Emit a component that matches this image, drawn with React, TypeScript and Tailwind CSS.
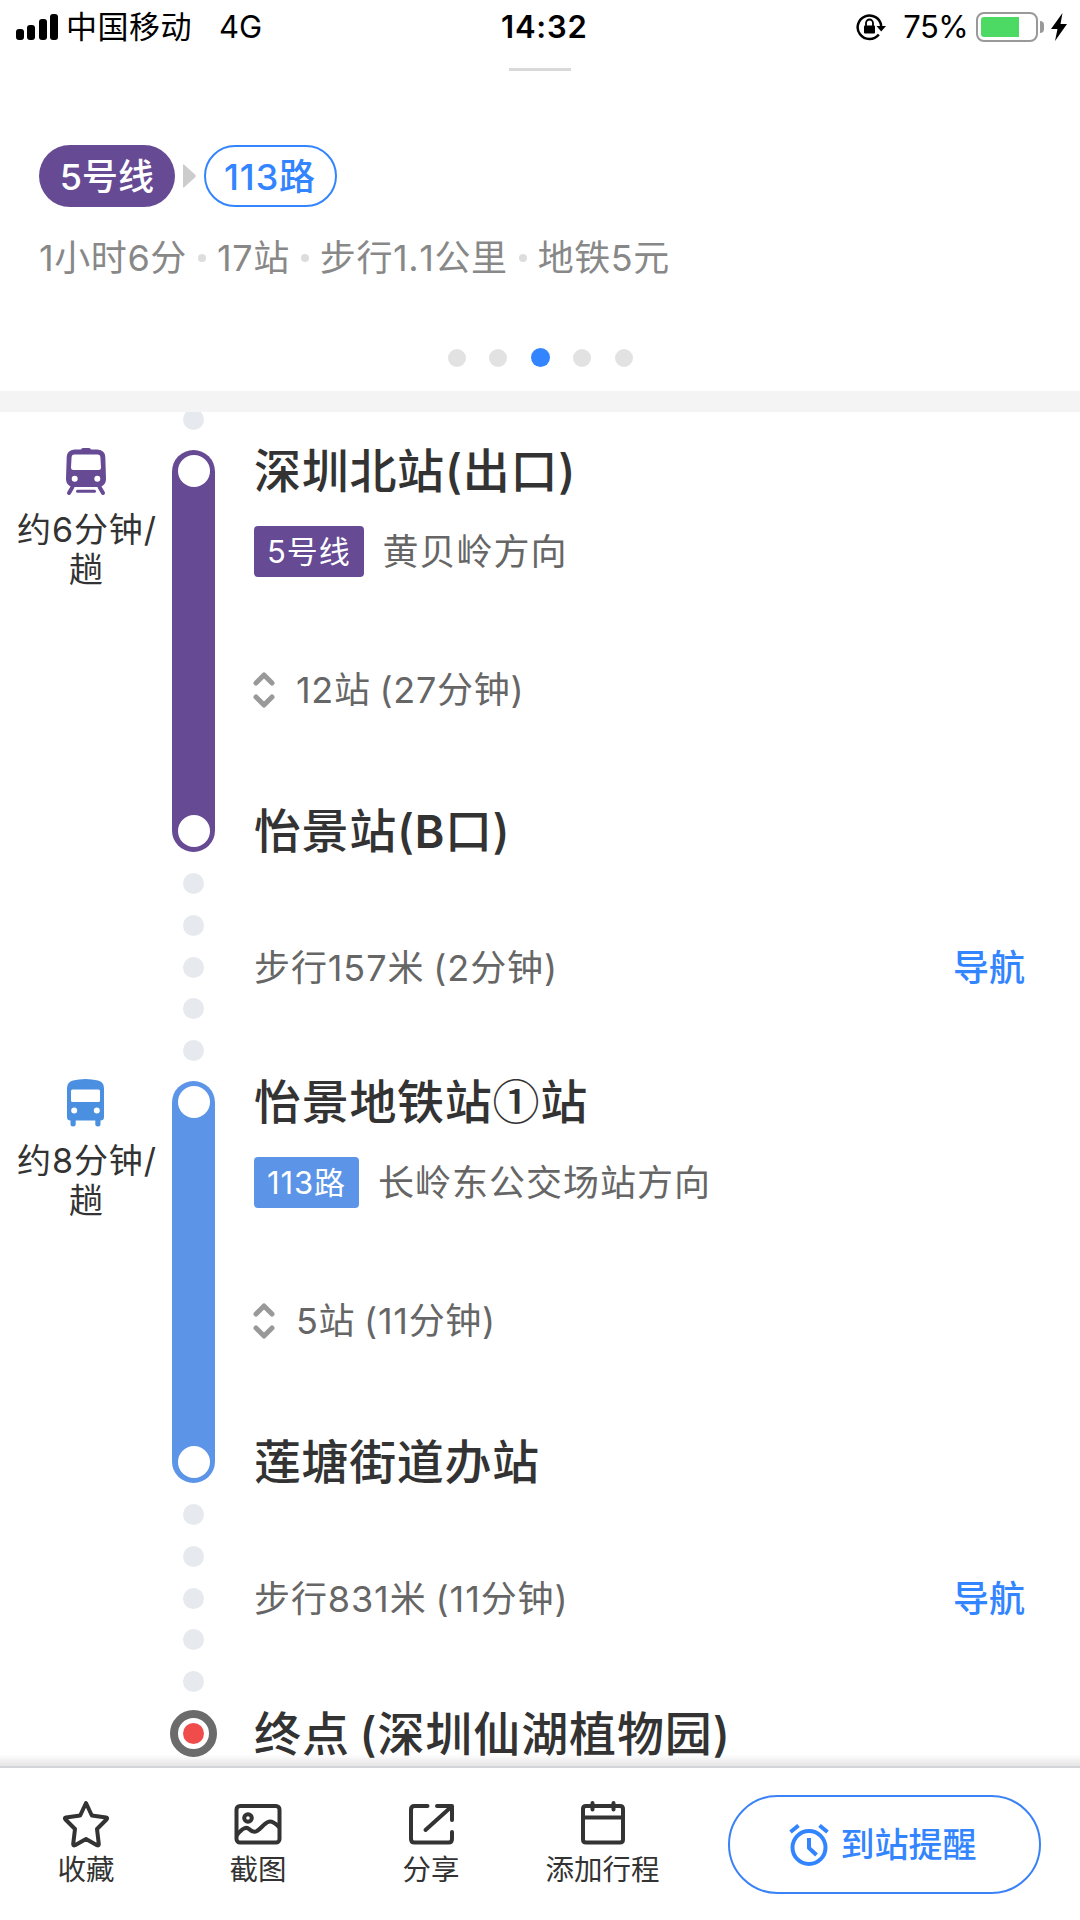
import React from "react";

type Leg = {
  kind: "metro" | "bus";
  every: string;
  from: string;
  line: string;
  direction: string;
  stops: string;
  to: string;
  walk: string;
};

const legs: Leg[] = [
  {
    kind: "metro",
    every: "约6分钟/",
    from: "深圳北站(出口)",
    line: "5号线",
    direction: "黄贝岭方向",
    stops: "12站 (27分钟)",
    to: "怡景站(B口)",
    walk: "步行157米 (2分钟)",
  },
  {
    kind: "bus",
    every: "约8分钟/",
    from: "怡景地铁站①站",
    line: "113路",
    direction: "长岭东公交场站方向",
    stops: "5站 (11分钟)",
    to: "莲塘街道办站",
    walk: "步行831米 (11分钟)",
  },
];

function MetroIcon() {
  return (
    <svg width="40" height="48" viewBox="0 0 40 48" className="block">
      <path
        fill="#664a94"
        fillRule="evenodd"
        d="M15 1.5Q15.4 0 17 0h6q1.600 0 2 1.500h6.500Q39 2 39.300 9l.7 22q0 6-6 8H6q-6-2-6-8L.7 9Q1 2 8.500 1.500ZM8 6.500Q5.700 6.500 5.600 9L5 19.500Q5 22 7.500 22h25Q35 22 35 19.500L34.400 9q-.1-2.500-2.400-2.500ZM8.700 27.700a3 3 0 1 0 0 6 3 3 0 0 0 0-6Zm22.600 0a3 3 0 1 0 0 6 3 3 0 0 0 0-6Z"
      />
      <path stroke="#664a94" strokeWidth="4" strokeLinecap="round" fill="none" d="M6.500 39 3 45M33.500 39 37 45" />
      <path stroke="#664a94" strokeWidth="3" strokeLinecap="round" fill="none" d="M11.500 43.200h17" />
    </svg>
  );
}

function BusIcon() {
  return (
    <svg width="37" height="48" viewBox="0 0 37 48" className="block">
      <path
        fill="#4a8fe0"
        fillRule="evenodd"
        d="M0 9Q0 3 6 1.500 12 0 18.500 0T31 1.500Q37 3 37 9v29q0 3.500-3.500 3.500V45q0 2.500-2.600 2.500T28.300 45v-3.500H8.700V45q0 2.500-2.600 2.500T3.500 45v-3.500Q0 41.500 0 38ZM5.500 10.500Q4 10.500 4 12v9.500Q4 23 5.500 23h26q1.500 0 1.500-1.500V12q0-1.500-1.500-1.500ZM7.200 28.500a3 3 0 1 0 0 6 3 3 0 0 0 0-6Zm22.600 0a3 3 0 1 0 0 6 3 3 0 0 0 0-6Z"
      />
    </svg>
  );
}

function RailDots() {
  return (
    <div className="mt-[21px] flex flex-col gap-[20.8px]">
      {[0, 1, 2, 3, 4].map((i) => (
        <span key={i} className="size-[21px] rounded-full bg-[#e6e9ee]" />
      ))}
    </div>
  );
}

/** Station name; Latin letters are heavier and circled digits use the CJK face. */
function StationName({ children }: { children: string }) {
  return (
    <>
      {children.split(/([A-Z]|①)/).map((part, i) => {
        if (part === "①") {
          return (
            <span key={i} className="font-['Noto_Sans_CJK_SC',sans-serif] leading-[0]">
              {part}
            </span>
          );
        }
        if (/^[A-Z]$/.test(part)) {
          return (
            <span key={i} className="text-[45px] leading-[0] font-semibold">
              {part}
            </span>
          );
        }
        return part;
      })}
    </>
  );
}

function LegView({ leg }: { leg: Leg }) {
  const color = leg.kind === "metro" ? "bg-[#664a94]" : "bg-[#5c94e8]";
  return (
    <section className="flex h-[631px]">
      <div className="flex w-[172px] flex-col items-center text-[34px] leading-[39.500px] text-[#333]">
        <div className="-mt-[2px] h-[62px] pr-[1px]">{leg.kind === "metro" ? <MetroIcon /> : <BusIcon />}</div>
        <span className="pl-[2px] tracking-[0.9px]">{leg.every}</span>
        <span>趟</span>
      </div>
      <div className="flex w-[43px] flex-col items-center">
        <div className={"flex h-[402px] w-[43px] flex-col items-center justify-between rounded-full py-[5px] " + color}>
          <span className="size-8 rounded-full bg-white" />
          <span className="size-8 rounded-full bg-white" />
        </div>
        <RailDots />
      </div>
      <div className="flex flex-1 flex-col pl-[39px] text-[36px] whitespace-nowrap text-[#666]">
        <h2 className="h-[42px] text-[47px] leading-[42px] font-medium tracking-[0.7px] text-[#333]">
          <StationName>{leg.from}</StationName>
        </h2>
        <div className="mt-[34px] flex h-[51px] items-center">
          <span className={"flex h-[51px] items-center rounded-[4px] px-[13px] pt-[2px] text-[31px] tracking-[0.9px] text-white " + color}>
            {leg.line}
          </span>
          <span className="ml-[19px] pt-[2px] leading-[51px] tracking-[1px]">{leg.direction}</span>
        </div>
        <div className="mt-[93px] flex h-10 items-center">
          <svg width="22" height="38" viewBox="0 0 22 38" fill="none" stroke="#999" strokeWidth="5" strokeLinecap="round" strokeLinejoin="round" className="-ml-px">
            <path d="M3 12 11 4l8 8M3 26l8 8 8-8" />
          </svg>
          <span className="ml-[21px] leading-10 tracking-[0.7px] [word-spacing:-2px]">{leg.stops}</span>
        </div>
        <h2 className="mt-[100px] h-[42px] text-[47px] leading-[42px] font-medium tracking-[0.6px] text-[#333]">
          <StationName>{leg.to}</StationName>
        </h2>
        <div className="mt-[96px] flex h-10 items-center justify-between pr-[55px] leading-10">
          <span className="tracking-[0.9px] [word-spacing:-2px]">{leg.walk}</span>
          <span className="font-medium text-[#3385ff]">导航</span>
        </div>
      </div>
    </section>
  );
}

function StatusBar() {
  return (
    <header className="flex h-[54px] items-center text-[31px] leading-[54px] text-black">
      <div className="flex w-[501px] items-center">
        <div className="ml-[16px] flex h-[26px] w-[42px] items-end justify-between">
          <span className="h-[11px] w-2 rounded-[3px] bg-black" />
          <span className="h-[15px] w-2 rounded-[3px] bg-black" />
          <span className="h-[21px] w-2 rounded-[3px] bg-black" />
          <span className="h-[26px] w-2 rounded-[3px] bg-black" />
        </div>
        <span className="ml-[8px] tracking-[0.5px]">中国移动</span>
        <span className="ml-[27px]">4G</span>
      </div>
      <span className="font-semibold tracking-[0.8px]">14:32</span>
      <div className="flex flex-1 items-center justify-end pr-[13px]">
        <svg width="30" height="28" viewBox="0 0 30 28">
          <path d="M22.800 21.500A11.800 11.800 0 1 1 25.200 13" fill="none" stroke="#000" strokeWidth="2.500" />
          <path d="M20.500 13h9.500l-4.800 5.500Z" fill="#000" />
          <rect x="8" y="12.500" width="11" height="8" rx="1" fill="#000" />
          <path d="M10 13v-3a3.500 3.500 0 0 1 7 0v3" fill="none" stroke="#000" strokeWidth="1.800" />
        </svg>
        <span className="ml-[17px] tracking-[-0.700px]">75%</span>
        <div className="ml-[8px] flex h-[30px] w-[62px] items-center rounded-[8px] border-[2.500px] border-[#999] px-[3px]">
          <span className="h-[20px] w-[38px] rounded-l-[3px] bg-[#4cd964]" />
        </div>
        <span className="ml-[2px] h-[12px] w-[4px] rounded-r-full bg-[#999]" />
        <svg width="16" height="28" viewBox="0 0 16 28" className="ml-[7px]">
          <path d="M11.500 0 0 16h6.500L4 28 16 11H9.500Z" fill="#000" />
        </svg>
      </div>
    </header>
  );
}

function Separator() {
  return <span className="size-2 rounded-full bg-[#ddd]" />;
}

function Action({ label, width, children }: { label: string; width: string; children: React.ReactNode }) {
  return (
    <div className={"flex flex-col items-center " + width}>
      <svg width="48" height="48" viewBox="0 0 48 48" fill="none" stroke="#333" strokeWidth="4" strokeLinecap="round" strokeLinejoin="round">
        {children}
      </svg>
      <span className="mt-[4px] text-[28.500px] leading-[36px] whitespace-nowrap text-[#333]">{label}</span>
    </div>
  );
}

export default function App() {
  return (
    <main className="flex h-[1920px] w-[1080px] flex-col overflow-hidden bg-white font-['Inter','Noto_Sans_CJK_SC',sans-serif] [font-kerning:none]">
      <StatusBar />
      <div className="mt-[14px] h-[3px] w-[62px] self-center bg-[#d9d9d9]" />

      <div className="mt-[74px] ml-[39px] flex h-[62px] items-center text-[36px] font-medium">
        <span className="flex h-[62px] w-[136px] items-center justify-center rounded-full bg-[#664a94] pt-px text-white">5号线</span>
        <svg width="13" height="24" viewBox="0 0 13 24" className="ml-[8px]">
          <path d="M0 1.500Q0-.5 1.500 1L12 10.500q1.500 1.500 0 3L1.500 23Q0 24.500 0 22.500Z" fill="#ccc" />
        </svg>
        <span className="ml-[8px] flex h-[62px] w-[133px] items-center justify-center rounded-full border-2 border-[#3385ff] pt-px pr-px tracking-[0.9px] text-[#3385ff]">113路</span>
      </div>

      <div className="mt-[31px] ml-[39px] flex h-10 items-center gap-[11px] text-[36px] leading-10 tracking-[0.6px] whitespace-nowrap text-[#888]">
        <span>1小时6分</span>
        <Separator />
        <span>17站</span>
        <Separator />
        <span>步行1.1公里</span>
        <Separator />
        <span>地铁5元</span>
      </div>

      <div className="mt-[70px] flex items-center gap-[23.500px] self-center">
        <span className="size-[18px] rounded-full bg-[#e2e2e2]" />
        <span className="size-[18px] rounded-full bg-[#e2e2e2]" />
        <span className="size-[19px] rounded-full bg-[#3385ff]" />
        <span className="size-[18px] rounded-full bg-[#e2e2e2]" />
        <span className="size-[18px] rounded-full bg-[#e2e2e2]" />
      </div>

      <div className="mt-[24px] h-[21px] shrink-0 bg-[#f4f4f4]" />

      <div className="h-[1354px] shrink-0 overflow-hidden">
        <div className="-mt-[3px] ml-[183px] h-[41px]">
          <div className="size-[21px] rounded-full bg-[#e6e9ee]" />
        </div>
        {legs.map((leg) => (
          <LegView key={leg.from} leg={leg} />
        ))}
        <div className="-mt-[2px] flex h-[47px] items-center">
          <div className="ml-[170px] flex size-[47px] items-center justify-center rounded-full border-8 border-[#6b6b6b]">
            <span className="size-[21px] rounded-full bg-[#f04c4c]" />
          </div>
          <h2 className="ml-[37px] text-[47px] leading-[47px] font-medium tracking-[0.9px] whitespace-nowrap text-[#333] [word-spacing:-4px]">终点 (深圳仙湖植物园)</h2>
        </div>
      </div>

      <footer className="relative flex h-[154px] shrink-0 border-t-2 border-[#d3d4d7] bg-white pt-[32px]">
        <div className="absolute inset-x-0 -top-[14px] h-3 bg-linear-to-b from-transparent to-black/10" />
        <Action label="收藏" width="w-[172px]">
          <path d="m24 3 5.800 12.500L44 17.500q2 .5.500 2L35 29l1.800 15q0 2-1.800 1.200L24 39l-11 6.200q-1.800.8-1.800-1.200L13 29 3.500 19.500q-1.500-1.500.5-2l14.200-2Z" />
        </Action>
        <Action label="截图" width="w-[172px]">
          <rect x="2.500" y="6" width="43" height="36.500" rx="3.500" />
          <circle cx="14" cy="18" r="3.800" />
          <path d="M3 35q8-10 12-6t8 2c8-5 10-16 22-4" />
        </Action>
        <Action label="分享" width="w-[174px]">
          <path d="M20.500 6H7.500Q4 6 4 9.500V39q0 3.500 3.500 3.500h34q3.500 0 3.500-3.500v-7M30 6h15v14M43.500 7.500 18.500 30" />
        </Action>
        <Action label="添加行程" width="w-[169px]">
          <path d="M7 6h34q3 0 3 3v30.500q0 3-3 3H7q-3 0-3-3V9q0-3 3-3ZM4 17.500h40M13.500 3v6.500M34.500 3v6.500" />
        </Action>
        <button className="-mt-[5px] ml-[41px] flex h-[99px] w-[313px] items-center justify-center rounded-full border-[2.500px] border-[#3b82f6] pr-[4px] text-[34px] font-medium text-[#3385ff]">
          <svg width="40" height="42" viewBox="0 0 40 42" fill="none" stroke="#3385ff" strokeWidth="4">
            <circle cx="20" cy="23.500" r="16.500" />
            <path d="M20 14v10l7.500 7" strokeLinejoin="round" />
            <path d="m1.500 8 8-6.500M38.500 8l-8-6.500" />
          </svg>
          <span className="ml-[12px]">到站提醒</span>
        </button>
      </footer>
    </main>
  );
}
